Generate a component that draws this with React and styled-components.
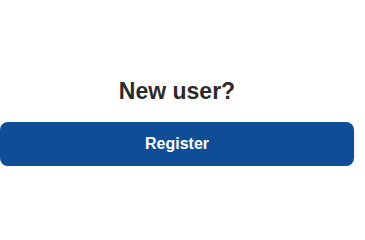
import React from 'react';
import styled, { createGlobalStyle } from 'styled-components';

const GlobalStyle = createGlobalStyle`
  body {
    margin: 0;
    background: #fff;
    font-family: 'Liberation Sans', Arial, sans-serif;
  }
`;

const Section = styled.section`
  width: 354px;
  padding-top: 78px;
  display: flex;
  flex-direction: column;
  align-items: center;
  gap: 18px;
`;

const Title = styled.h2`
  margin: 0;
  font-size: 23px;
  font-weight: 700;
  color: #2b2b2b;
  line-height: 26px;
`;

const RegisterButton = styled.button`
  width: 100%;
  height: 44px;
  border: none;
  border-radius: 8px;
  background: #0f4d96;
  color: #fff;
  font-family: 'Liberation Sans', Arial, sans-serif;
  font-size: 16px;
  font-weight: 700;
  box-shadow: 0 2px 4px rgba(15, 77, 150, 0.15);
  cursor: pointer;
`;

const App = () => (
  <>
    <GlobalStyle />
    <Section>
      <Title>New user?</Title>
      <RegisterButton type="button">Register</RegisterButton>
    </Section>
  </>
);

export default App;
